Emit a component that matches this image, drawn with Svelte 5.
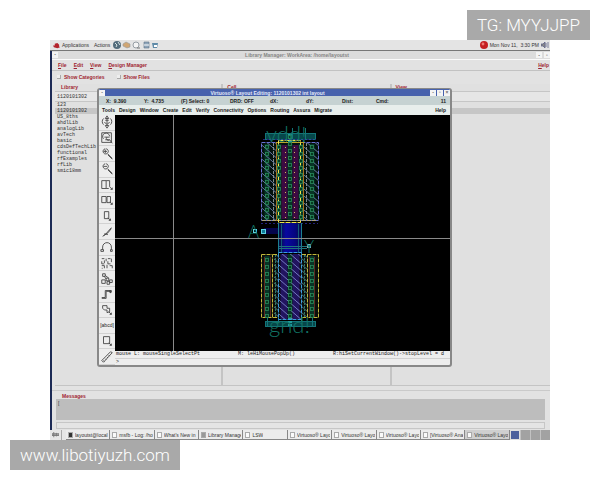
<script>
    const libraries = [
        "123", "1120101302", "US_8ths", "ahdlLib", "analogLib", "avTech",
        "basic", "cdsDefTechLib", "functional", "rfExamples", "rfLib", "smic18mm"
    ];
    const managerMenu = ["File", "Edit", "View", "Design Manager"];
    const editorMenu = [
        "Tools", "Design", "Window", "Create", "Edit", "Verify",
        "Connectivity", "Options", "Routing", "Assura", "Migrate"
    ];
    const tasks = [
        "layoutst@local", "msfb - Log: /ho", "What's New in", "Library Manage", "LSW",
        "Virtuoso® Layo", "Virtuoso® Layo", "Virtuoso® Layo", "[Virtuoso® Ana", "Virtuoso® Layo"
    ];
    const tools = [
        { name: "Fit", d: "M8 3v8M5 8l3 3 3-3M8 1l-2 3h4zM8 15l-2-3h4zM4 4a5 5 0 0 0 0 7M12 4a5 5 0 0 1 0 7M6 6h4" },
        { name: "Redraw", d: "M2 2h11v11H2zM4 9a4 4 0 1 1 7-3M5 7h6M6 10h5l3 4M8 7a2 2 0 1 0 3 3" },
        { name: "Zoom in", d: "M6 2a3 3 0 1 0 1 0M6 3v4M4 5h4M9 8l5 5M9 9l5 5" },
        { name: "Zoom out", d: "M6 2a3 3 0 1 0 1 0M4 5h4M9 8l5 5M9 9l5 5" },
        { name: "Stretch", d: "M2 3h5v9H2zM7 3h4v7M7 12h3M11 10l3 3M12 13h2v-2" },
        { name: "Copy", d: "M2 4h5v7H2zM8 4h4v7H8zM11 10l3 3M12 13h2v-2" },
        { name: "Move", d: "M5 3h5v8H5zM9 10l3 3M10 13h2v-2" },
        { name: "Edit shape", d: "M3 13l3-2 7-8M4 12l5-3 4-5M5 10l4 1" },
        { name: "Undo", d: "M3 11V8a4 4 0 0 1 10 0v3M1 11h3v2H1zM12 11h2v2h-2z" },
        { name: "Properties", d: "M2 3h3M7 3v3M9 3h3M13 3v4M2 6v3h3M5 5v3M9 6v3h3M2 11h3M5 11v3M8 10v4M11 11h3v3M2 14h1" },
        { name: "Instance", d: "M3 2h3v3H3zM5 5l2 3M2 9h4v4H2zM7 7h3v3H7zM8 11h3v3H8zM11 9h3v3h-3zM6 4l4 3" },
        { name: "Path", d: "M2 12h4V4h6v3M2 13h5V5h5M11 4h2v2h-2z" },
        { name: "Polygon", d: "M3 3h5v3h3v4l-3 1V8H5L3 6zM10 10l3 3M11 13h2v-2" },
        { name: "Label", text: "[abcd]" },
        { name: "Rectangle", d: "M4 3h7v8H4zM10 10l3 3M11 13h2v-2" },
        { name: "Ruler", d: "M2 12L12 2l2 1L4 14zM4 12l1 1M6 10l1 1M8 8l1 1M10 6l1 1" }
    ];

    // contact columns: [x, first y, last y]
    const contacts = [
        [267, 147, 217], [279, 147, 217], [290, 137, 217], [301, 147, 217], [312, 147, 217],
        [267, 260, 316], [290, 260, 316], [312, 260, 316]
    ].flatMap(([x, top, bottom]) => {
        const cells = [];
        for (let y = top; y <= bottom; y += 7) cells.push({ x, y });
        return cells;
    });

    let selected = $state("1120101302");
    let filter = $state("1120101302");
</script>

<main>
    <div class="mark mark-top">TG: MYYJJPP</div>

    <div class="desktop">
        <header class="panel">
            <svg class="hat" viewBox="0 0 8 8"><path fill="#b3232c" d="M2 2l3-1 2 2v2l1 1-3 1-4-1-1-2 2 0z" /></svg>
            <button>Applications</button>
            <button>Actions</button>
            <svg class="launchers" viewBox="0 0 46 8">
                <circle cx="4" cy="4" r="4" fill="#526c7c" />
                <path d="M2 2l2 2-1 2M5 1l2 3" stroke="#d8e4e4" fill="none" />
                <path d="M10 3l3-2 4 2v3l-3 1-4-2z" fill="#d0a674" stroke="#94989c" stroke-width=".6" />
                <circle cx="23" cy="4" r="3" fill="#f4f4f4" stroke="#959da4" /><path d="M24 7h3" stroke="#777" />
                <path d="M31 1h5v6h-5z" fill="#8fa5b9" stroke="#5e7488" stroke-width=".6" /><path d="M31 4h5" stroke="#fff" />
                <path d="M39 2h6l-1 5h-4z" fill="#5f8ba8" /><path d="M41 4h3v2h-3z" fill="#fff" />
            </svg>
            <span class="spacer"></span>
            <svg class="alert" viewBox="0 0 8 8"><circle cx="4" cy="4" r="4" fill="#c51f20" /><circle cx="3" cy="3" r="1.4" fill="#ee7770" /></svg>
            <span>Mon Nov 11,&nbsp; 3:30 PM</span>
            <svg class="alert" viewBox="0 0 8 8"><path d="M0 3h2l2-2v6L2 5H0zM5 2v4M7 1v6" fill="#888" stroke="#5e6289" stroke-width=".8" /></svg>
        </header>

        <section class="manager">
            <div class="manager-title">
                <span class="chip">-</span>
                <span>Library Manager: WorkArea: /home/layoutst</span>
                <span class="boxes"><button aria-label="Minimize">-</button><button aria-label="Maximize">▫</button></span>
            </div>
            <nav class="manager-menu">
                {#each managerMenu as item}
                    <button><u>{item[0]}</u>{item.slice(1)}</button>
                {/each}
                <span class="spacer"></span>
                <button><u>H</u>elp</button>
            </nav>
            <div class="checks">
                <label><input type="checkbox" /> Show Categories</label>
                <label><input type="checkbox" /> Show Files</label>
            </div>

            <div class="columns">
                <div class="column">
                    <label for="library">Library</label>
                    <input id="library" bind:value={filter} />
                    <ul>
                        {#each libraries as library}
                            <li>
                                <button class:selected={library === selected} on:click={() => (selected = library)}>{library}</button>
                            </li>
                        {/each}
                    </ul>
                </div>
                <div class="column centered">
                    <label for="cell">Cell</label>
                    <input id="cell" />
                    <ul><li></li><li class="selected"></li></ul>
                </div>
                <div class="column centered">
                    <label for="view">View</label>
                    <input id="view" />
                    <ul><li></li><li class="selected"></li></ul>
                </div>
            </div>

            <div class="messages">
                <label for="messages">Messages</label>
                <textarea id="messages" readonly>[</textarea>
                <div class="scroll"></div>
            </div>

            <section class="editor">
                <div class="editor-title">
                    <span class="chip">-</span>
                    <span>Virtuoso® Layout Editing: 1120101302 int layout</span>
                    <span class="boxes">
                        <button aria-label="Minimize">-</button><button aria-label="Maximize">▫</button><button aria-label="Close">×</button>
                    </span>
                </div>
                <div class="coords">
                    <span>X: &nbsp;9.390</span>
                    <span>Y: &nbsp;4.735</span>
                    <span>(F) Select: 0</span>
                    <span>DRD: OFF</span>
                    <span>dX:</span>
                    <span>dY:</span>
                    <span>Dist:</span>
                    <span>Cmd:</span>
                    <span class="count">11</span>
                </div>
                <nav class="editor-menu">
                    {#each editorMenu as item}
                        <button>{item}</button>
                    {/each}
                    <span class="spacer"></span>
                    <button>Help</button>
                </nav>
                <div class="work">
                    <div class="toolbar">
                        {#each tools as tool}
                            <button aria-label={tool.name}>
                                {#if tool.text}
                                    {tool.text}
                                {:else}
                                    <svg viewBox="0 0 16 16"><path d={tool.d} /></svg>
                                {/if}
                            </button>
                        {/each}
                    </div>
                    <div class="stage">
                        <svg class="canvas" viewBox="115 115 335 236" preserveAspectRatio="xMidYMid slice">
                            <defs>
                                <pattern id="hatch" width="7" height="6" patternUnits="userSpaceOnUse">
                                    <path d="M0 0l7 6" stroke="#5f8f96" stroke-width=".8" />
                                </pattern>
                                <pattern id="hatchViolet" width="8" height="7" patternUnits="userSpaceOnUse">
                                    <path d="M0 0l8 7" stroke="#6c7fae" stroke-width=".9" />
                                </pattern>
                                <pattern id="hatchBlue" width="8" height="7" patternUnits="userSpaceOnUse">
                                    <path d="M0 0l8 7" stroke="#7a86c8" stroke-width=".9" />
                                </pattern>
                                <linearGradient id="metal">
                                    <stop offset="0" stop-color="#04103a" />
                                    <stop offset=".3" stop-color="#0808a0" />
                                    <stop offset=".7" stop-color="#050580" />
                                    <stop offset="1" stop-color="#04103a" />
                                </linearGradient>
                            </defs>

                            <!-- rails -->
                            <g fill="#06474a" stroke="#147478">
                                <rect x="265.500" y="133.500" width="50" height="6" />
                                <rect x="265.500" y="321.500" width="50" height="5" />
                            </g>
                            <path d="M292.500 128v12M305.500 128v12M267.500 316v10M312.500 316v10" stroke="#147478" />
                            <path d="M290 134v8M290 318v9" stroke="#1f9c9a" stroke-width="4" stroke-dasharray="2 1" />

                            <!-- upper device -->
                            <rect x="262" y="143" width="56" height="78" fill="#04120f" />
                            <path d="M267 144v76M279 144v76M290 144v76M301 144v76M312 144v76" stroke="#073526" stroke-width="5" />
                            <path d="M284.500 145v74M295.500 145v74" stroke="#3d0b42" stroke-width="6" />
                            <rect x="262" y="143" width="14" height="78" fill="url(#hatchViolet)" />
                            <rect x="304" y="143" width="14" height="78" fill="url(#hatchViolet)" />
                            <rect x="261.500" y="142.500" width="57" height="78" fill="none" stroke="#6670d0" stroke-dasharray="4 1" />
                            <path d="M263 139.500h53M261 223.500h57" stroke="#23237c" stroke-dasharray="2 2" />
                            <path d="M285.500 147v72M294.500 147v72" stroke="#d8b45c" stroke-dasharray="1 4" />
                            <path d="M273.500 143v77M306.500 143v77" stroke="#808c8c" stroke-dasharray="3 1" />
                            <path d="M276.500 142v79M303.500 142v79" stroke="#a8731f" />
                            <path d="M262 220.500h55" stroke="#a9a17c" stroke-dasharray="4 1" />
                            <path d="M276 142.500h28" stroke="#b8a52c" />
                            <rect x="278.500" y="140.500" width="22" height="82" fill="none" stroke="#ece34a" stroke-dasharray="5 1" />

                            <!-- gate connection -->
                            <path d="M264 228h18v6h-18z" fill="#05054c" />
                            <rect x="279" y="223" width="23" height="30" fill="url(#metal)" />
                            <path d="M278.500 223v98M301.500 223v98" stroke="#1c7e91" />
                            <path d="M281.500 224v29M298.500 224v29" stroke="#125a78" />
                            <path d="M279 246.500h28M279 248.500h28" stroke="#1e717d" />

                            <!-- lower device -->
                            <rect x="262" y="255" width="56" height="63" fill="#0a0f0c" />
                            <path d="M267 256v61M290 254v64M312 256v61" stroke="#073526" stroke-width="5" />
                            <path d="M284 254v65M296 254v65" stroke="#221460" stroke-width="7" />
                            <rect x="274" y="255" width="5" height="63" fill="url(#hatch)" />
                            <rect x="302" y="255" width="5" height="63" fill="url(#hatch)" />
                            <rect x="279" y="254" width="22" height="66" fill="url(#hatchBlue)" />
                            <rect x="278.500" y="252.500" width="23" height="67" fill="none" stroke="#3a9ce0" stroke-dasharray="4 1" />
                            <path d="M275.500 255v63M304.500 255v63" stroke="#2f7a62" stroke-dasharray="2 1" />
                            <path d="M264.500 257v60M270.500 257v60M309.500 257v60M314.500 257v60" stroke="#5c2a20" />
                            <g fill="none" stroke="#c2b83b" stroke-dasharray="4 1">
                                <rect x="261.500" y="254.500" width="11" height="63" />
                                <rect x="307.500" y="254.500" width="11" height="63" />
                                <path d="M273 254.500h5M302 254.500h5M273 317.500h5M302 317.500h5" />
                            </g>

                            {#each contacts as c}
                                <rect x={c.x - 1.5} y={c.y - 1.5} width="3" height="3" fill="#063a20" stroke="#2a8a5c" stroke-width=".8" />
                            {/each}

                            <!-- pins -->
                            <g fill="#127b99" stroke="#5ed3e3">
                                <rect x="253.500" y="229.500" width="3" height="3" fill="#022" />
                                <rect x="261.500" y="229.500" width="4" height="4" />
                                <rect x="307.500" y="244.500" width="3" height="3" stroke="#7fb0b4" />
                            </g>
                            <g class="labels">
                                <text x="266" y="142">vdd!</text>
                                <text x="269" y="333">gnd!</text>
                                <text x="248" y="238">A</text>
                                <text x="304" y="253">Y</text>
                            </g>

                            <path d="M173.500 0v600M0 238.500h800" stroke="#8a8a8a" />
                        </svg>
                    </div>
                </div>
                <div class="mouse">
                    <span>mouse L: mouseSingleSelectPt</span>
                    <span>M: leHiMousePopUp()</span>
                    <span>R:hiSetCurrentWindow()-&gt;stopLevel = d</span>
                </div>
                <div class="prompt">&gt;</div>
            </section>
        </section>

        <footer class="taskbar">
            <button class="show" aria-label="Show desktop"><svg viewBox="0 0 8 6"><path d="M0 2h8v2H0zM2 0v6M5 1v4" stroke="#777" fill="#aaa" /></svg></button>
            {#each tasks as task, i}
                <button class="task" class:current={i === tasks.length - 1}>
                    <i class:dark={i === 0} class:grey={i === 3}></i><span>{task}</span>
                </button>
            {/each}
            <div class="pager"><b></b><b></b><b></b><b></b></div>
        </footer>
    </div>

    <div class="mark mark-bottom">www.libotiyuzh.com</div>
</main>

<style>
    :global(body) {
        margin: 0;
        background: #fff;
    }

    main {
        box-sizing: border-box;
        position: relative;
        display: flex;
        min-height: 100vh;
        padding: 40px 50px;
        font: 5px/6px "Liberation Sans", Arial, sans-serif;
        color: #333;
    }

    button, input, textarea {
        margin: 0;
        padding: 0;
        border: 0;
        border-radius: 0;
        background: none;
        font: inherit;
        color: inherit;
        box-sizing: border-box;
    }

    svg {
        display: block;
    }

    .spacer {
        flex: 1;
    }

    .mark {
        position: absolute;
        padding: 0 10px;
        background: #a9a9a9;
        color: #fff;
        font: 300 17px/30px Roboto, "Liberation Sans", sans-serif;
    }

    .mark-top {
        top: 10px;
        right: 10px;
    }

    .mark-bottom {
        bottom: 10px;
        left: 10px;
    }

    .desktop {
        flex: 1;
        min-width: 0;
        display: flex;
        flex-direction: column;
        background: #e4e4e4;
    }

    .panel {
        display: flex;
        align-items: center;
        gap: 5px;
        height: 10px;
        padding: 0 4px 0 3px;
        border-bottom: 1px solid #777;
    }

    .hat {
        width: 7px;
        height: 7px;
        margin-right: -3px;
    }

    .launchers {
        width: 46px;
        height: 8px;
        margin-left: -2px;
    }

    .alert {
        width: 8px;
        height: 8px;
        margin: 0 -3px;
    }

    .manager {
        position: relative;
        flex: 1;
        min-height: 0;
        display: flex;
        flex-direction: column;
        border-left: 2px solid #1c2a55;
        background: #e2e2e2;
    }

    .manager-title {
        display: flex;
        align-items: center;
        justify-content: space-between;
        height: 8px;
        background: #dcdcdc;
        border-bottom: 1px solid #fafafa;
        color: #858585;
        font-weight: bold;
    }

    .chip, .boxes button {
        width: 6px;
        height: 6px;
        background: #f4f4f4;
        color: #666;
        text-align: center;
        line-height: 5px;
    }

    .boxes {
        display: flex;
        gap: 2px;
    }

    .manager-menu {
        display: flex;
        align-items: center;
        gap: 7px;
        height: 10px;
        padding: 0 1px 0 6px;
        border-bottom: 1px solid #c2c2c2;
        color: #a01f30;
        font-weight: bold;
    }

    .checks {
        display: flex;
        gap: 12px;
        padding: 3px 5px 4px;
        color: #a01f30;
        font-weight: bold;
    }

    .checks label {
        display: flex;
        align-items: center;
        gap: 3px;
    }

    .checks input {
        appearance: none;
        width: 4px;
        height: 4px;
        border: solid #aaa;
        border-width: 0 1px 1px 0;
        background: #eee;
    }

    .columns {
        flex: 1;
        min-height: 0;
        display: grid;
        grid-template-columns: 34fr 34fr 32fr;
        padding: 0 0 4px 3px;
        border-bottom: 1px solid #cacaca;
    }

    .column {
        display: flex;
        flex-direction: column;
        border-right: 2px solid #c4c4c4;
        border-bottom: 1px solid #c4c4c4;
        background: #e0e0e0;
        font-family: "Liberation Mono", monospace;
    }

    .column:last-child {
        border-right: 0;
    }

    .column label, .messages label {
        padding-left: 6px;
        color: #a01f30;
        font-family: "Liberation Sans", Arial, sans-serif;
        font-weight: bold;
    }

    .centered label {
        padding-left: 4px;
    }

    .column input {
        width: 100%;
        height: 11px;
        margin-top: 1px;
        padding-left: 2px;
        border: solid #c6c6c6;
        border-width: 1px 0;
        background: #e6e6e6;
    }

    ul {
        margin: 0;
        padding: 0;
        list-style: none;
    }

    li {
        height: 6px;
    }

    li button {
        display: block;
        width: 100%;
        padding-left: 2px;
        text-align: left;
    }

    .selected {
        background: #c6c6c6;
    }

    .messages {
        display: flex;
        flex-direction: column;
        padding: 2px 5px 1px 4px;
    }

    .messages textarea {
        height: 21px;
        padding: 1px 2px;
        background: #bdbdbd;
        resize: none;
        outline: none;
        overflow: hidden;
    }

    .scroll {
        height: 5px;
        margin-top: 2px;
        border: 1px solid #c6c6c6;
        background: #e4e4e4;
    }

    .editor {
        position: absolute;
        top: 37px;
        right: 98px;
        bottom: 63px;
        left: 45px;
        display: flex;
        flex-direction: column;
        box-sizing: border-box;
        border: 1px solid #888;
        border-width: 1px 2px 2px;
        border-radius: 3px;
        background: #ededed;
        color: #222;
        overflow: hidden;
    }

    .editor-title {
        display: flex;
        align-items: center;
        justify-content: space-between;
        height: 7px;
        background: #4762ad;
        color: #e4e9fa;
        font-weight: bold;
    }

    .editor-title .boxes {
        gap: 1px;
    }

    .coords {
        display: grid;
        grid-template-columns: 38px 37px 49px 40px 36px 36px 34px 30px 1fr;
        align-items: center;
        height: 9px;
        padding: 0 4px 0 7px;
        background: #c6d2d2;
        font-weight: bold;
    }

    .count {
        text-align: right;
    }

    .editor-menu {
        display: flex;
        align-items: center;
        gap: 4px;
        height: 10px;
        padding: 0 4px 0 3px;
        background: #e8eeec;
        font-weight: bold;
    }

    .work {
        flex: 1;
        min-height: 0;
        display: flex;
        margin-bottom: -14px;
    }

    .toolbar {
        width: 16px;
        display: flex;
        flex-direction: column;
    }

    .toolbar button {
        flex: 1;
        min-height: 0;
        display: grid;
        place-items: center;
        border-bottom: 1px solid #d2d2d2;
    }

    .toolbar svg {
        width: 14px;
        height: 14px;
        fill: none;
        stroke: #444;
    }

    .stage {
        flex: 1;
        min-width: 0;
        margin-bottom: 14px;
        background: #000;
    }

    .canvas {
        width: 100%;
        height: 100%;
    }

    .labels {
        fill: #127567;
        font: 300 22px Lato, sans-serif;
    }

    .labels text:nth-child(n + 3) {
        font-size: 17px;
    }

    .mouse, .prompt {
        margin-left: 16px;
        padding: 0 6px 0 1px;
        font-family: "Liberation Mono", monospace;
    }

    .mouse {
        display: flex;
        justify-content: space-between;
        height: 7px;
        border-bottom: 1px solid #d0d0d0;
    }

    .prompt {
        height: 6px;
    }

    .taskbar {
        display: flex;
        height: 10px;
        background: #e6e6e6;
    }

    .show {
        width: 12px;
        margin-right: 4px;
        padding: 2px;
        border-right: 1px solid #aaa;
    }

    .task {
        flex: 44 1 0;
        min-width: 0;
        display: flex;
        align-items: center;
        gap: 2px;
        padding: 0 1px 0 2px;
        border: solid #888;
        border-width: 0 1px 1px 0;
        background: #ececec;
        white-space: nowrap;
    }

    .task span {
        overflow: hidden;
    }

    .task i {
        flex: none;
        width: 5px;
        height: 6px;
        box-sizing: border-box;
        border: 1px solid #aaa;
        background: #fafafa;
    }

    .task .dark {
        background: #333;
    }

    .task .grey {
        background: #999;
    }

    .current {
        background: #cfcfcf;
    }

    .pager {
        flex: 44 1 0;
        display: flex;
        gap: 1px;
        background: #c2c2c2;
    }

    .pager b {
        flex: 1;
        background: #a2a2a2;
    }

    .pager b:first-child {
        margin: 1px;
        background: #4b5f9c;
        outline: 1px solid #ddd;
    }
</style>
